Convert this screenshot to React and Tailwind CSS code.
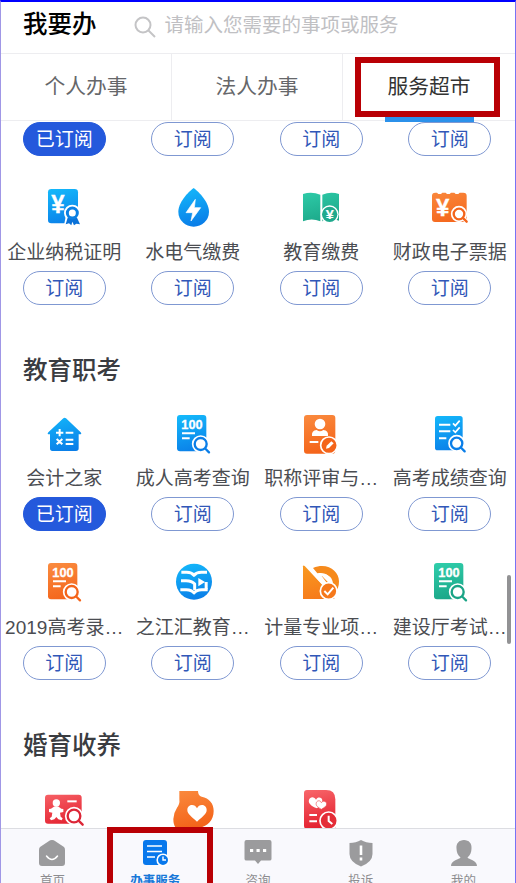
import React from "react";
import clsx from "clsx";

const palettes = {
    blue: { from: "#14b9fb", to: "#0a7ee8" },
    green: { from: "#2fcdaa", to: "#1aa486" },
    orange: { from: "#fa8a3e", to: "#f4641a" },
    amber: { from: "#f99a20", to: "#f6781a" },
    red: { from: "#f8666a", to: "#e3202f" },
};

const IconBase = ({ id, color, children }) => (
    <svg viewBox="0 0 132 132" className="w-11 h-11 shrink-0 overflow-visible">
        <defs>
            <linearGradient id={id} gradientUnits="userSpaceOnUse" x1="30" y1="10" x2="60" y2="125">
                <stop offset="0" stopColor={palettes[color].from} />
                <stop offset="1" stopColor={palettes[color].to} />
            </linearGradient>
        </defs>
        {children}
    </svg>
);

const Magnifier = ({ x, y, r = 17, fill }) => (
    <g fill="none" strokeLinecap="round">
        <circle cx={x} cy={y} r={r + 5} fill="#fff" stroke="#fff" strokeWidth="7" />
        <path d={`M${x + r - 3} ${y + r - 3}L${x + r + 8} ${y + r + 8}`} stroke="#fff" strokeWidth="13" />
        <circle cx={x} cy={y} r={r} stroke={fill} strokeWidth="7" />
        <path d={`M${x + r - 3} ${y + r - 3}L${x + r + 7} ${y + r + 7}`} stroke={fill} strokeWidth="7" />
    </g>
);

const Glyph = ({ x, y, size, width, stroke = 1, children }) => (
    <text x={x} y={y} fill="#fff" stroke="#fff" strokeWidth={stroke} fontSize={size} fontWeight="700" textAnchor="middle" textLength={width} lengthAdjust="spacingAndGlyphs" fontFamily="Liberation Sans, sans-serif">
        {children}
    </text>
);

const TaxIcon = () => (
    <IconBase id="tax" color="blue">
        <rect x="18" y="12" width="90" height="103" rx="10" fill="url(#tax)" />
        <Glyph x="48" y="83" size="76" width="40">¥</Glyph>
        <path d="M72 90l-6 31 18-4 10 6 20 0-8-34z" fill="#fff" />
        <circle cx="91" cy="84" r="25" fill="#fff" />
        <path d="M77 98l-6 20 10-3 7 6 3-11 5 11 7-5 11 2-9-20z" fill="#0a72d8" />
        <circle cx="91" cy="84" r="15" fill="#fff" stroke="#0a80e4" strokeWidth="9" />
    </IconBase>
);

const WaterIcon = () => (
    <IconBase id="water" color="blue">
        <path d="M68 9C76 14 114 48 114 80a46 45 0 0 1-92 0C22 48 60 14 68 9z" fill="url(#water)" />
        <path d="M73 43L45 83h20l-5 25 29-40H70z" fill="#fff" stroke="#fff" strokeWidth="2" strokeLinejoin="round" />
    </IconBase>
);

const BookIcon = () => (
    <IconBase id="book" color="green">
        <path d="M12 27q26-9 52 2v80q-26-11-52 0z" fill="url(#book)" />
        <path d="M70 29q25-11 50-2v80q-25-9-50 2z" fill="url(#book)" />
        <circle cx="92" cy="88" r="27" fill="#fff" />
        <circle cx="92" cy="88" r="23" fill="#1fa98d" />
        <Glyph x="92" y="101" size="38" width="24" stroke={0.5}>¥</Glyph>
    </IconBase>
);

const ReceiptIcon = () => (
    <IconBase id="receipt" color="orange">
        <path d="M12 32q0-9 10-9h5l4 4h8l4-4h10l4 4h8l4-4h10l4 4h8l4-4h11q10 0 10 9v70q0 9-9 9H21q-9 0-9-9z" fill="url(#receipt)" />
        <Glyph x="44" y="92" size="70" width="40">¥</Glyph>
        <Magnifier x={93} y={87} r={16} fill="#f4641a" />
    </IconBase>
);

const HouseIcon = () => (
    <IconBase id="house" color="blue">
        <path d="M64 22q4-4 8 0l44 42q5 6-3 6h-3v42q0 8-8 8H31q-7 0-7-8V70h-3q-7 0-2-6z" fill="url(#house)" />
        <path d="M42 65h22M53 54v22M71 65h23M71 86h23M71 99h23M44 84l17 16M61 84l-17 16" stroke="#fff" strokeWidth="6" />
    </IconBase>
);

const ExamIcon = ({ id, color, dy = 0 }) => (
    <IconBase id={id} color={color}>
        <g transform={`translate(0 ${dy})`}>
            <rect x="18" y="9" width="88" height="109" rx="9" fill={`url(#${id})`} />
            <Glyph x="63" y="50" size="41" width="64">100</Glyph>
            <path d="M33 64h39M33 79h23" stroke="#fff" strokeWidth="6" />
            <Magnifier x={89} y={96} r={18} fill={palettes[color].to} />
        </g>
    </IconBase>
);

const PersonIcon = () => (
    <IconBase id="person" color="orange">
        <rect x="15" y="12" width="94" height="116" rx="9" fill="url(#person)" />
        <circle cx="63" cy="39" r="16" fill="#fff" />
        <path d="M39 75q-2-17 14-18 10 8 20 0 16 1 14 18z" fill="#fff" />
        <path d="M32 93h26" stroke="#fff" strokeWidth="6" />
        <circle cx="90" cy="103" r="25" fill="#f4641a" stroke="#fff" strokeWidth="5" />
        <path d="M81 113l2-9 14-13 7 6-14 14z" fill="#fff" />
    </IconBase>
);

const ChecklistIcon = () => (
    <IconBase id="checklist" color="blue">
        <rect x="21" y="15" width="83" height="103" rx="8" fill="url(#checklist)" />
        <path d="M33 41h34M33 61h34M33 82h22" stroke="#fff" strokeWidth="6" />
        <path d="M75 37l7 7 13-15M75 57l7 7 13-15" stroke="#fff" strokeWidth="5" fill="none" />
        <Magnifier x={86} y={97} r={17} fill="#0a7ee8" />
    </IconBase>
);

const ZhijiangIcon = () => (
    <IconBase id="zhijiang" color="blue">
        <circle cx="69" cy="65" r="54" fill="url(#zhijiang)" />
        <g fill="none" stroke="#fff" strokeWidth="9" strokeLinejoin="round">
            <path d="M31 37h16q15 0 22 9 7-9 22-9h17" />
            <path d="M30 62h15q18 0 26 10v18M28 89h18q16 0 23 10 7-10 23-10h18" />
        </g>
        <path d="M82 54l20 12-20 13zM101 66h9v22h-9z" fill="#fff" />
    </IconBase>
);

const RulerIcon = () => (
    <IconBase id="ruler" color="amber">
        <path d="M42 24c44-18 78 10 78 40 0 15-4 24-11 32L86 72l-18-24h20c-8-10-22-10-33-8z" fill="#f68a1c" />
        <path d="M73 43c18 0 28 13 29 29l-12-2-21-22z" fill="#fff" />
        <path d="M10 10v107h92z" fill="#fff" />
        <path d="M12 19q0-5 5-1l88 94q4 5-3 5H12z" fill="url(#ruler)" />
        <path d="M38 35L94 97" stroke="#fff" strokeWidth="5" />
        <circle cx="89" cy="93" r="25" fill="#f6781a" stroke="#fff" strokeWidth="5" />
        <path d="M76 93l10 10 17-20" fill="none" stroke="#fff" strokeWidth="6" />
    </IconBase>
);

const BirthIcon = () => (
    <IconBase id="birth" color="red">
        <rect x="9" y="26" width="110" height="87" rx="9" fill="url(#birth)" />
        <circle cx="43" cy="51" r="11" fill="#fff" />
        <path d="M43 61q6 0 15 7l6 1v9l-10 2 2 12 6 5-3 6-10-3-6-7-6 7-10 3-4-6 6-5 2-12-10-2v-9l6-1q9-7 16-7z" fill="#fff" />
        <path d="M76 46h28" stroke="#fff" strokeWidth="6" />
        <Magnifier x={96} y={90} r={19} fill="#dc2637" />
    </IconBase>
);

const PregnancyIcon = () => (
    <IconBase id="pregnancy" color="orange">
        <path d="M25 15h56q0 14 11 17c23 5 36 20 36 43 0 28-18 46-43 50H14Q7 116 7 99q0-17 11-34 9-11 7-25z" fill="url(#pregnancy)" />
        <path d="M78 107C61 91 49 84 49 72c0-18 23-20 29-5 6-15 29-13 29 5 0 12-12 19-29 35z" fill="#fff" />
    </IconBase>
);

const MarriageIcon = () => (
    <IconBase id="marriage" color="red">
        <path d="M24 12h57q28 0 28 28v88H24q-9 0-9-9V21q0-9 9-9z" fill="url(#marriage)" />
        <path d="M54 67C35 59 27 51 30 41c3-10 17-10 21 0 5-10 19-7 19 3 0 9-7 13-16 23z" fill="#fff" />
        <path d="M67 70C53 61 50 58 52 50c3-8 13-7 15 0 4-7 16-5 16 4 0 7-8 11-16 16z" fill="#fff" stroke="#ee4f55" strokeWidth="2" />
        <path d="M31 87h23M31 106h23" stroke="#fff" strokeWidth="6" />
        <circle cx="89" cy="104" r="26" fill="#e42c37" stroke="#fff" strokeWidth="5" />
        <path d="M89 89v16l11 9" fill="none" stroke="#fff" strokeWidth="6" />
    </IconBase>
);

const payments = [
    { label: "企业纳税证明", icon: TaxIcon },
    { label: "水电气缴费", icon: WaterIcon },
    { label: "教育缴费", icon: BookIcon },
    { label: "财政电子票据", icon: ReceiptIcon },
];

const education = [
    { label: "会计之家", icon: HouseIcon, subscribed: true },
    { label: "成人高考查询", icon: () => <ExamIcon id="adult" color="blue" dy={3} /> },
    { label: "职称评审与…", icon: PersonIcon },
    { label: "高考成绩查询", icon: ChecklistIcon },
];

const exams = [
    { label: "2019高考录…", icon: () => <ExamIcon id="gaokao" color="orange" /> },
    { label: "之江汇教育…", icon: ZhijiangIcon },
    { label: "计量专业项…", icon: RulerIcon },
    { label: "建设厅考试…", icon: () => <ExamIcon id="build" color="green" /> },
];

const tabs = ["个人办事", "法人办事", "服务超市"];

const SubscribeButton = ({ subscribed }) => (
    <button
        className={clsx(
            "w-[83px] h-[34px] shrink-0 rounded-full border text-[19px] leading-none flex items-center justify-center",
            subscribed ? "bg-[#2459dc] border-[#2459dc] text-white" : "bg-white border-[#7f98d2] text-[#3157b8]"
        )}
    >
        {subscribed ? "已订阅" : "订阅"}
    </button>
);

const ServiceRow = ({ items }) => (
    <div className="grid grid-cols-4">
        {items.map((item) => (
            <div key={item.label} className="flex flex-col items-center">
                <item.icon />
                <p className="h-[42px] pt-[5px] flex items-center whitespace-nowrap text-[19px] leading-none text-[#4b4d52]">{item.label}</p>
                <SubscribeButton subscribed={item.subscribed} />
            </div>
        ))}
    </div>
);

const SectionTitle = ({ children }) => (
    <h2 className="h-[106px] pl-[23px] pt-[26px] text-[24.5px] leading-[80px] font-medium text-[#3a3c41]">{children}</h2>
);

const navItems = [
    {
        label: "首页",
        icon: (
            <>
                <path d="M13 0q2 0 3 1l9 6q1 1 1 3v13q0 3-3 3H3q-3 0-3-3V10q0-2 1-3l9-6q1-1 3-1z" fill="#9b9b9d" />
                <path d="M7.500 16q5.500 7 11 0" fill="none" stroke="#fff" strokeWidth="1.500" strokeLinecap="round" />
            </>
        ),
    },
    {
        label: "办事服务",
        active: true,
        icon: (
            <>
                <rect x="1" y="0" width="24" height="25" rx="3" fill="#0878ec" />
                <path d="M5 6h15M5 11.500h15M5 17h8" stroke="#fff" strokeWidth="1.300" />
                <circle cx="21" cy="20" r="5.800" fill="#0878ec" stroke="#fff" strokeWidth="1.600" />
                <path d="M21 16.500V20h3" fill="none" stroke="#fff" strokeWidth="1.400" />
            </>
        ),
    },
    {
        label: "咨询",
        icon: (
            <>
                <path d="M1.500 0h23q2 0 2 2v17q0 1.500-2 1.500h-8.500L13 24l-3-3.500H1.500q-2 0-2-1.500V2q0-2 2-2z" fill="#9b9b9d" />
                <path d="M5 9h3.200v3H5zM11.500 9h3.200v3h-3.200zM18 9h3.200v3H18z" fill="#fff" />
            </>
        ),
    },
    {
        label: "投诉",
        icon: (
            <>
                <path d="M13 0q5 3 11.500 3v11q0 8-11.500 12.500Q1.500 22 1.500 14V3Q8 3 13 0z" fill="#9b9b9d" />
                <path d="M13 5.500v9.500M13 17.500v3" stroke="#fff" strokeWidth="2.600" />
            </>
        ),
    },
    {
        label: "我的",
        icon: (
            <path d="M13 0c5 0 8 3.500 7.500 8.500 0 4-1.500 7-4 9 1 2 9.500 2.500 9.500 8.500H0c0-6 8.500-6.500 9.500-8.500-2.500-2-4-5-4-9C5 3.500 8 0 13 0z" fill="#9b9b9d" />
        ),
    },
];

const BottomNav = () => (
    <nav className="relative h-[55px] shrink-0 grid grid-cols-5 border-t border-[#dcdde2] bg-[#f9f9fd]">
        {navItems.map((item) => (
            <div key={item.label} className="relative flex flex-col items-center pt-[11px]">
                {item.active && <div className="absolute -top-[2px] left-[3px] w-[106px] h-[80px] border-[6px] border-[#b90005]" />}
                <svg viewBox="0 0 26 26" className="w-[26px] h-[26px] shrink-0 overflow-visible">{item.icon}</svg>
                <span className={clsx("mt-[7px] text-[12.5px] leading-[16px] whitespace-nowrap", item.active ? "font-bold text-[#1878d8]" : "text-[#8d8d90]")}>
                    {item.label}
                </span>
            </div>
        ))}
    </nav>
);

const App = () => {
    return (
        <div className="relative w-[516px] h-[883px] overflow-hidden flex flex-col bg-white border-t-2 border-t-[#0000ff] border-l border-l-[#a097e6] border-r border-r-[#7773f5] font-['Liberation_Sans','Noto_Sans_CJK_SC',sans-serif]">
            {/* Search header */}
            <header className="h-[52px] shrink-0 flex items-center border-b border-[#ededf0] pl-[22px] pb-[4px]">
                <h1 className="text-[24.5px] leading-none font-medium text-black">我要办</h1>
                <svg viewBox="0 0 22 22" className="ml-[37px] mt-[2px] w-[22px] h-[22px]" fill="none" stroke="#c4c4c6" strokeWidth="2">
                    <circle cx="9" cy="9" r="7.500" />
                    <path d="M14.500 14.500L21 21" />
                </svg>
                <span className="ml-[9px] text-[19.500px] leading-none text-[#c0c0c3]">请输入您需要的事项或服务</span>
            </header>

            {/* Tabs */}
            <div className="h-[67px] shrink-0 grid grid-cols-[171px_171px_172px] border-b border-[#ededf0]">
                {tabs.map((tab, i) => (
                    <div
                        key={tab}
                        className={clsx(
                            "relative flex items-center justify-center pt-px text-[20.75px] leading-none",
                            i < 2 ? "border-r border-[#ededf0] text-[#66676a]" : "text-[#333]"
                        )}
                    >
                        {tab}
                        {i === 2 && (
                            <>
                                <div className="absolute left-[42px] -bottom-[2px] w-[89px] h-[6px] bg-[#2b91ea]" />
                                <div className="absolute left-[12px] top-[3px] w-[145px] h-[60px] border-[6.500px] border-[#b90005]" />
                            </>
                        )}
                    </div>
                ))}
            </div>

            {/* Service list */}
            <main className="flex-1 min-h-0 overflow-hidden -ml-px mr-px">
                <div className="h-[64px] pt-px grid grid-cols-4 justify-items-center items-start">
                    <SubscribeButton subscribed />
                    <SubscribeButton />
                    <SubscribeButton />
                    <SubscribeButton />
                </div>
                <ServiceRow items={payments} />
                <SectionTitle>教育职考</SectionTitle>
                <ServiceRow items={education} />
                <div className="h-[29px]" />
                <ServiceRow items={exams} />
                <SectionTitle>婚育收养</SectionTitle>
                <div className="grid grid-cols-4 justify-items-center">
                    <BirthIcon />
                    <PregnancyIcon />
                    <MarriageIcon />
                </div>
            </main>

            <BottomNav />
            <div className="absolute right-[4px] top-[573px] w-[4px] h-[69px] rounded-full bg-[#929294]" />
        </div>
    );
};

export default App;
